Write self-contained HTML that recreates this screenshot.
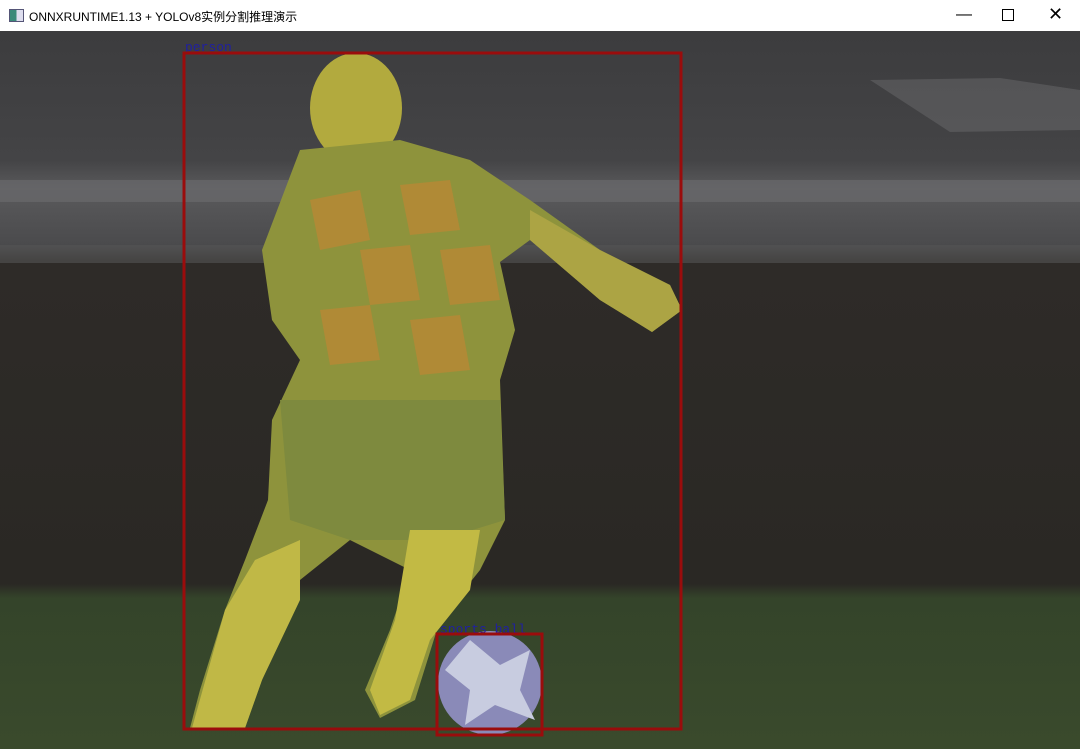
<!DOCTYPE html>
<html><head><meta charset="utf-8"><style>
html,body{margin:0;padding:0;width:1080px;height:749px;overflow:hidden;background:#fff}
.tb{position:absolute;left:0;top:0;width:1080px;height:31px;background:#fff;font:12px "Liberation Sans","Noto Sans CJK SC",sans-serif;color:#000}
.tb .t{position:absolute;left:29px;top:8px}
.ic{position:absolute;left:9px;top:9px;width:13px;height:11px;border:1px solid #557;background:linear-gradient(90deg,#3a8a7a 50%,#dde 50%)}
.ctl{position:absolute;top:6px;font:16px "Liberation Sans",sans-serif}
</style></head><body>
<div class="tb"><div class="ic"></div><div class="t">ONNXRUNTIME1.13 + YOLOv8实例分割推理演示</div>
<div class="ctl" style="left:956px">—</div>
<div class="ctl" style="left:1002px;top:9px;width:10px;height:10px;border:1px solid #000"></div>
<div class="ctl" style="left:1048px;top:4px;font-size:18px">✕</div></div>
<svg style="position:absolute;left:0;top:31px" width="1080" height="718" viewBox="0 31 1080 718">
<defs><linearGradient id="bg" x1="0" y1="0" x2="0" y2="1">
<stop offset="0" stop-color="#3c3c3e"/><stop offset="0.18" stop-color="#444446"/><stop offset="0.22" stop-color="#5a5a5c"/><stop offset="0.3" stop-color="#4a4a4c"/><stop offset="0.32" stop-color="#2e2b28"/><stop offset="0.77" stop-color="#2a2824"/><stop offset="0.79" stop-color="#34442a"/><stop offset="1" stop-color="#3a4a2c"/></linearGradient></defs>
<rect x="0" y="31" width="1080" height="718" fill="url(#bg)"/>
<rect x="0" y="180" width="1080" height="22" fill="#6a6a6c" opacity="0.7"/>
<rect x="0" y="245" width="1080" height="18" fill="#555" opacity="0.6"/>
<path d="M870 80 L1000 78 L1080 90 L1080 130 L950 132 Z" fill="#6a6a6c" opacity="0.5"/>
<ellipse cx="356" cy="108" rx="46" ry="55" fill="#b2aa3e"/>
<path d="M300 150 L400 140 L470 160 L530 200 L600 250 L670 285 L682 310 L652 332 L600 300 L530 240 L500 262 L515 330 L500 380 L505 520 L480 570 L440 620 L415 700 L380 718 L365 690 L390 630 L410 570 L350 540 L300 580 L262 680 L245 728 L190 728 L200 690 L225 610 L245 560 L268 500 L272 420 L300 360 L272 320 L262 250 Z" fill="#8e933c"/>
<path d="M310 200 L360 190 L370 240 L320 250 Z M400 185 L450 180 L460 230 L410 235 Z M360 250 L410 245 L420 300 L370 305 Z M440 250 L490 245 L500 300 L450 305 Z M320 310 L370 305 L380 360 L330 365 Z M410 320 L460 315 L470 370 L420 375 Z" fill="#b08a36"/>
<path d="M280 400 L500 400 L505 520 L440 540 L350 540 L290 520 Z" fill="#7e8a3e"/>
<path d="M255 560 L300 540 L300 600 L262 680 L245 728 L192 728 L225 610 Z" fill="#c0b846"/>
<path d="M410 530 L480 530 L470 590 L430 640 L410 700 L380 715 L370 690 L395 620 Z" fill="#c2ba44"/>
<path d="M530 210 L600 250 L670 285 L682 310 L652 332 L600 300 L530 240 Z" fill="#aca444"/>
<circle cx="490" cy="683" r="52" fill="#8a8ab8"/>
<path d="M470 640 L500 665 L530 650 L520 690 L535 720 L495 705 L465 725 L470 690 L445 670 Z" fill="#c8cce0"/>
<text x="185" y="51" font-family="Liberation Mono,monospace" font-size="13" fill="#2020a0">person</text>
<text x="440" y="633" font-family="Liberation Mono,monospace" font-size="13" fill="#2020a0">sports ball</text>
<rect x="184" y="53" width="497" height="676" fill="none" stroke="#9a0c0c" stroke-width="3"/>
<rect x="437" y="634" width="105" height="101" fill="none" stroke="#9a0c0c" stroke-width="3"/>
</svg>
</body></html>
